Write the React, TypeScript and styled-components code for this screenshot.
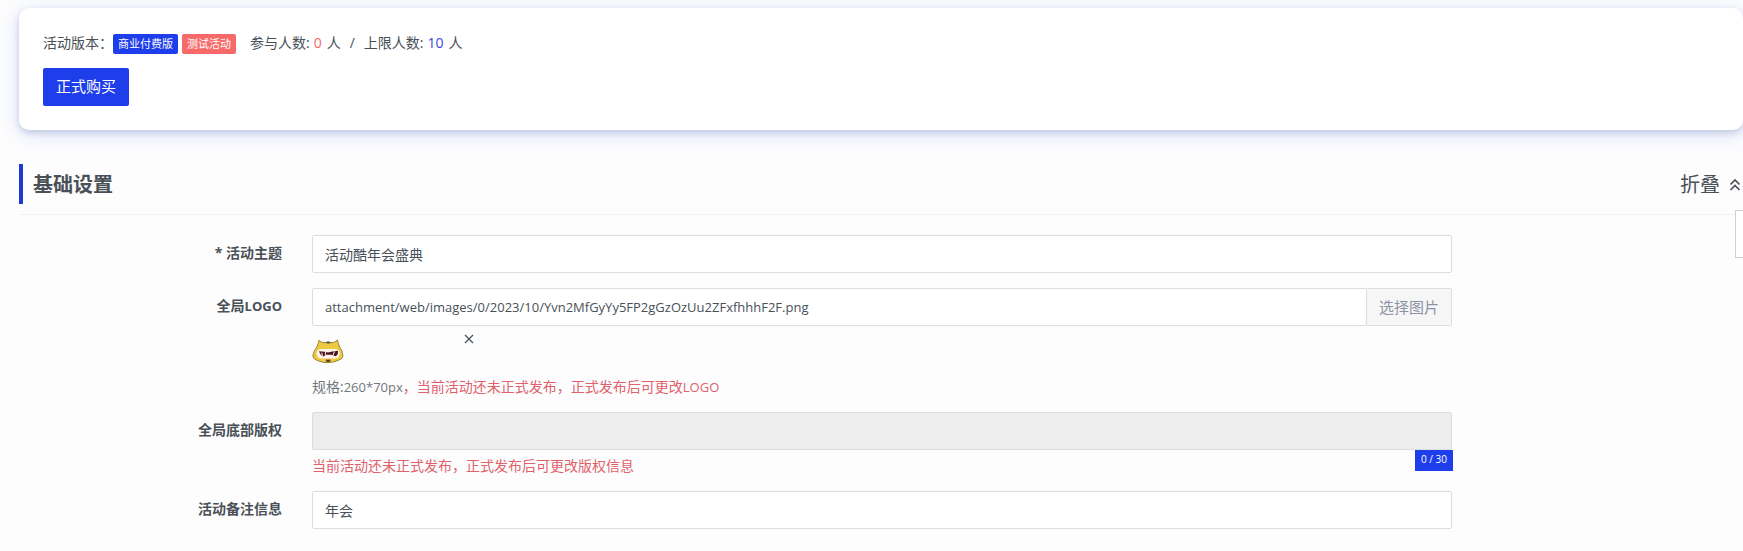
import React from 'react';
import styled, { createGlobalStyle } from 'styled-components';

const GlobalStyle = createGlobalStyle`
  *, *::before, *::after { box-sizing: border-box; }
  html { overflow-x: hidden; background: #fdfdfe; }
  body {
    margin: 0;
    background: #fdfdfe;
    color: #495057;
    font-family: "Open Sans", "Noto Sans CJK SC", sans-serif;
    font-size: 14px;
    line-height: 20px;
  }
  button, input { font: inherit; color: inherit; }
`;

const Page = styled.main`
  position: relative;
  padding: 8px 0 20px 19px;
`;

const Card = styled.section`
  display: flex;
  flex-direction: column;
  align-items: flex-start;
  gap: 14px;
  padding: 26px 24px 24px;
  border-radius: 10px;
  background: #fff;
  box-shadow: 0 3px 6px rgba(130, 150, 190, 0.35), 0 4px 20px rgba(80, 110, 220, 0.2);
`;

const VersionLine = styled.div`
  display: flex;
  align-items: flex-start;
  height: 20px;
  line-height: 18px;
`;

const Tag = styled.span<{ $color: string }>`
  margin-right: 4px;
  padding: 0 5px;
  border-radius: 2px;
  background: ${(p) => p.$color};
  color: #fff;
  font-size: 11px;
  line-height: 20px;
`;

const Stats = styled.span`
  display: flex;
  margin-left: 10px;
`;

const Count = styled.span<{ $color: string }>`
  margin: 0 5px 0 4px;
  color: ${(p) => p.$color};
`;

const Slash = styled.span`
  margin: 0 9px;
`;

const BuyButton = styled.button`
  height: 38px;
  padding: 0 13px 2px;
  border: 0;
  border-radius: 2px;
  background: #1e3deb;
  color: #fff;
  font-size: 15px;
  cursor: pointer;
`;

const SectionHeader = styled.header`
  display: flex;
  align-items: center;
  justify-content: space-between;
  margin-top: 34px;
  padding-bottom: 10px;
  border-bottom: 1px solid #f2f2f4;
`;

const SectionTitle = styled.h2`
  margin: 0;
  padding: 2px 0 0 10px;
  border-left: 4px solid #2238d4;
  font-size: 20px;
  line-height: 38px;
`;

const FoldButton = styled.button`
  display: flex;
  align-items: center;
  gap: 8px;
  padding: 2px 1px 0 0;
  border: 0;
  background: none;
  font-size: 20px;
  line-height: 38px;
  cursor: pointer;
`;

const Form = styled.form`
  display: flex;
  flex-direction: column;
  gap: 15px;
  margin: 20px -12px 0 -10px;
`;

const Row = styled.div`
  display: grid;
  grid-template-columns: 2fr 8fr 2fr;
`;

const Label = styled.label`
  padding: 8px 18px 0 0;
  font-weight: 700;
  text-align: right;
`;

const Latin = styled.span`
  font-size: 13px;
`;

const Field = styled.div`
  position: relative;
  min-width: 0;
  padding: 0 12px;
`;

const InputGroup = styled.div`
  display: flex;
`;

const TextInput = styled.input<{ $latin?: boolean }>`
  display: block;
  flex: 1;
  width: 100%;
  min-width: 0;
  height: 38px;
  padding: 0 12px;
  border: 1px solid #dcdddf;
  border-radius: 2px;
  background: #fff;
  font-size: ${(p) => (p.$latin ? 13 : 14)}px;
  outline: none;
  &:disabled { background: #ededed; }
`;

const PickButton = styled.button`
  height: 38px;
  padding: 0 12px;
  border: 1px solid #dcdddf;
  border-left: 0;
  border-radius: 0 2px 2px 0;
  background: #f6f6f7;
  color: #8c93a3;
  font-size: 15px;
  cursor: pointer;
`;

const Preview = styled.div`
  display: flex;
  justify-content: space-between;
  align-items: flex-start;
  width: 163px;
  height: 51px;
  padding-top: 7px;
`;

const LogoArt = styled.svg`
  margin-top: 6px;
`;

const RemoveButton = styled.button`
  display: flex;
  padding: 0;
  border: 0;
  background: none;
  cursor: pointer;
`;

const Hint = styled.p<{ $gap?: number }>`
  margin: ${(p) => p.$gap || 0}px 0 0;
  color: #73777c;
  line-height: 20px;
`;

const Warning = styled.span`
  color: #e0616b;
`;

const Counter = styled.span`
  position: absolute;
  top: 38px;
  right: 11px;
  height: 21px;
  padding: 0 6px;
  background: #1e3deb;
  color: #fff;
  font-size: 10px;
  line-height: 19px;
`;

const SideDock = styled.aside`
  position: absolute;
  top: 210px;
  right: 0;
  width: 8px;
  height: 48px;
  border: 1px solid #cfd0d3;
  border-right: 0;
  background: #fff;
`;

function CatLogo() {
  return (
    <LogoArt width="32" height="25" viewBox="0 0 32 25" role="img" aria-label="LOGO">
      <path d="M7 1.2Q9 3.6 12 3.8Q16 2.6 20 3.8Q23 3.6 25.4 1Q26.4 5 27.6 8Q30.6 12 31 17Q30.5 20 26 21.5Q16 25.6 6 21.8Q1 20 .8 17Q1.4 12 4.8 8.2Q6.2 5 7 1.2Z" fill="#edc944" stroke="#9b8438" />
      <path d="M13.5 3.8Q16 1.2 19 3.8L16.2 4.8Z" fill="#5d5134" />
      <path d="M4.6 14Q5 10 10 10H22Q27.4 10 27.8 14Q27.8 19 23 19.4H9Q4.6 19 4.6 14Z" fill="#fff4ec" />
      <path d="M7 12.2L12.8 12.8L16 13.4L19 12.8L26 11.8Q26.2 16.6 23.6 17.2L19 15.8H14L11.4 17.4Q8.4 16.6 7 12.2Z" fill="#4b1420" />
      <path d="M9.6 13.6L10.6 16.8M20.8 16.8L22.6 12.4M13.4 12.8V15.8" stroke="#fff4ec" fill="none" />
      <ellipse cx="16.2" cy="21.5" rx="2.4" ry="1.6" fill="#574419" />
      <path d="M15 20.5H17.5" stroke="#d98255" />
    </LogoArt>
  );
}

export default function App() {
  return (
    <>
      <GlobalStyle />
      <Page>
        <Card>
          <VersionLine>
            <span>活动版本：</span>
            <Tag $color="#1e3deb">商业付费版</Tag>
            <Tag $color="#f86969">测试活动</Tag>
            <Stats>
              参与人数:<Count $color="#f86969">0</Count>人
              <Slash>/</Slash>
              上限人数:<Count $color="#3a46dc">10</Count>人
            </Stats>
          </VersionLine>
          <BuyButton type="button">正式购买</BuyButton>
        </Card>

        <SectionHeader>
          <SectionTitle>基础设置</SectionTitle>
          <FoldButton type="button">
            折叠
            <svg width="14" height="14" viewBox="0 0 14 14" fill="none" stroke="#495057" strokeWidth="1.7" aria-hidden="true">
              <path d="M2.5 6.5L7 2L11.5 6.5M2.5 12L7 7.5L11.5 12" />
            </svg>
          </FoldButton>
        </SectionHeader>

        <Form>
          <Row>
            <Label htmlFor="theme">* 活动主题</Label>
            <Field>
              <TextInput id="theme" type="text" defaultValue="活动酷年会盛典" />
            </Field>
          </Row>
          <Row>
            <Label htmlFor="logo">全局<Latin>LOGO</Latin></Label>
            <Field>
              <InputGroup>
                <TextInput
                  id="logo"
                  type="text"
                  $latin
                  defaultValue="attachment/web/images/0/2023/10/Yvn2MfGyYy5FP2gGzOzUu2ZFxfhhhF2F.png"
                />
                <PickButton type="button">选择图片</PickButton>
              </InputGroup>
              <Preview>
                <CatLogo />
                <RemoveButton type="button" aria-label="删除图片">
                  <svg width="12" height="12" viewBox="0 0 12 12" stroke="#495057" strokeWidth="1.2" aria-hidden="true">
                    <path d="M2 2L10 10M10 2L2 10" />
                  </svg>
                </RemoveButton>
              </Preview>
              <Hint>
                规格:<Latin>260*70px</Latin>
                <Warning>，当前活动还未正式发布，正式发布后可更改<Latin>LOGO</Latin></Warning>
              </Hint>
            </Field>
          </Row>
          <Row>
            <Label htmlFor="copyright">全局底部版权</Label>
            <Field>
              <TextInput id="copyright" type="text" disabled />
              <Counter>0 / 30</Counter>
              <Hint $gap={6}>
                <Warning>当前活动还未正式发布，正式发布后可更改版权信息</Warning>
              </Hint>
            </Field>
          </Row>
          <Row>
            <Label htmlFor="remark">活动备注信息</Label>
            <Field>
              <TextInput id="remark" type="text" defaultValue="年会" />
            </Field>
          </Row>
        </Form>
        <SideDock />
      </Page>
    </>
  );
}
